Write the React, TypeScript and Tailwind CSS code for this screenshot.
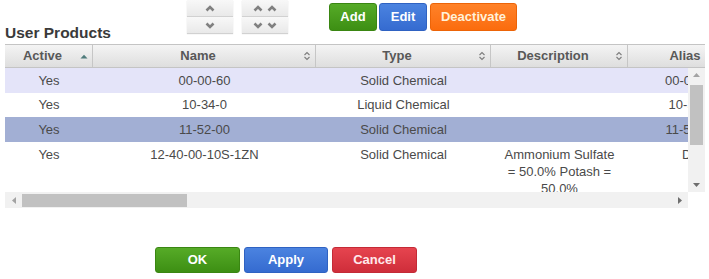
import React from "react"

type Row = {
  name: string
  type: string
  desc: string[]
  alias: string
  bg: string
  tall?: boolean
}

const rows: Row[] = [
  { name: "00-00-60", type: "Solid Chemical", desc: [], alias: "00-00-60", bg: "bg-[#e4e4f9]" },
  { name: "10-34-0", type: "Liquid Chemical", desc: [], alias: "10-34-0", bg: "bg-white" },
  { name: "11-52-00", type: "Solid Chemical", desc: [], alias: "11-52-00", bg: "bg-[#a2afd4]" },
  {
    name: "12-40-00-10S-1ZN",
    type: "Solid Chemical",
    desc: ["Ammonium Sulfate", "= 50.0% Potash =", "50.0%"],
    alias: "DS",
    bg: "bg-white",
    tall: true,
  },
]

function Chevron({ up }: { up?: boolean }) {
  return (
    <svg width="10" height="7" viewBox="0 0 10 7" className="block">
      <path
        d={up ? "M1.5 5.5 L5 2 L8.5 5.5" : "M1.5 1.5 L5 5 L8.5 1.5"}
        fill="none"
        stroke="#808080"
        strokeWidth="2.6"
      />
    </svg>
  )
}

function ArrowBtn({ up, double }: { up?: boolean; double?: boolean }) {
  return (
    <div className="h-[16px] w-[46px] flex items-center justify-center gap-[4px] bg-gradient-to-b from-[#f8f8f8] to-[#e9e9e9] shadow-[0_1px_1px_rgba(0,0,0,0.18)]">
      <Chevron up={up} />
      {double && <Chevron up={up} />}
    </div>
  )
}

function SortIcon() {
  return (
    <svg width="8" height="10" viewBox="0 0 8 10" className="block shrink-0">
      <path d="M1.5 4 L4 1.5 L6.5 4 M1.5 6 L4 8.5 L6.5 6" fill="none" stroke="#7d7d7d" strokeWidth="1.1" />
    </svg>
  )
}

function HeadCell({ label, width, active, last }: { label: string; width: string; active?: boolean; last?: boolean }) {
  return (
    <div className={`${width} shrink-0 h-full flex items-center pr-[4px] ${last ? "" : "border-r border-[#c6c6c6]"}`}>
      <span className="flex-1 text-center">{label}</span>
      <span className="w-[8px] flex justify-center">
        {active ? (
          <svg width="8" height="5" viewBox="0 0 8 5" className="block">
            <path d="M0.5 4.5 L4 0.8 L7.5 4.5 Z" fill="#4f7b7b" />
          </svg>
        ) : (
          <SortIcon />
        )}
      </span>
    </div>
  )
}

function Btn({ label, cls, width, height }: { label: string; cls: string; width: string; height: string }) {
  return (
    <div className={`${width} ${height} rounded-[3px] flex items-center justify-center font-bold text-[13px] ${cls}`}>
      {label}
    </div>
  )
}

export default function App() {
  return (
    <div className="w-[709px] h-[279px] bg-white overflow-hidden font-['Liberation_Sans',Arial,sans-serif]">
      {/* toolbar */}
      <div className="h-[44px] flex items-start">
        <div className="w-[187px] pl-[5px] mt-[24px] text-[15.5px] leading-[18px] font-bold text-[#3a3a3a]">
          User Products
        </div>
        <div className="flex flex-col gap-[1px]">
          <ArrowBtn up />
          <ArrowBtn />
        </div>
        <div className="ml-[9px] flex flex-col gap-[1px]">
          <ArrowBtn up double />
          <ArrowBtn double />
        </div>
        <div className="ml-[41px] mt-[3px] flex">
          <Btn label="Add" width="w-[48px]" height="h-[28px]" cls="bg-gradient-to-b from-[#56ab27] to-[#3d8f13] text-white border border-[#3a8612]" />
          <Btn label="Edit" width="w-[48px]" height="h-[28px]" cls="ml-[2px] bg-gradient-to-b from-[#4b83e0] to-[#356bd0] text-white border border-[#2f62c2]" />
          <Btn label="Deactivate" width="w-[87px]" height="h-[28px]" cls="ml-[3px] bg-gradient-to-b from-[#ff8228] to-[#fb6c0c] text-[#fff1d9] border border-[#ec6408]" />
        </div>
      </div>

      {/* grid */}
      <div className="ml-[5px] w-[700px]">
        <div className="h-[24px] flex overflow-hidden border-y border-[#c4c4c4] bg-gradient-to-b from-[#f4f4f4] to-[#dedede] text-[13px] font-bold text-[#585858]">
          <HeadCell label="Active" width="w-[88px]" active />
          <HeadCell label="Name" width="w-[223px]" />
          <HeadCell label="Type" width="w-[175px]" />
          <HeadCell label="Description" width="w-[137px]" />
          <HeadCell label="Alias" width="w-[126px]" last />
        </div>

        <div className="flex h-[124px]">
          <div className="w-[683px] overflow-hidden text-[13px] text-[#4a4a4a]">
            {rows.map((r, i) => (
              <div key={i} className={`flex w-[749px] ${r.bg} ${r.tall ? "h-[60px] items-start pt-[4px] leading-[17px]" : "h-[24.5px] items-center"}`}>
                <div className="w-[88px] shrink-0 text-center">Yes</div>
                <div className="w-[223px] shrink-0 text-center">{r.name}</div>
                <div className="w-[175px] shrink-0 text-center">{r.type}</div>
                <div className="w-[137px] shrink-0 text-center">
                  {r.desc.map((d, j) => (
                    <div key={j}>{d}</div>
                  ))}
                </div>
                <div className="w-[126px] shrink-0 text-center">{r.alias}</div>
              </div>
            ))}
          </div>
          {/* vertical scrollbar */}
          <div className="w-[17px] h-full bg-[#f1f1f1] flex flex-col items-center">
            <div className="h-[14px] flex items-center">
              <svg width="7" height="4" viewBox="0 0 7 4" className="block">
                <path d="M0 4 L3.5 0 L7 4 Z" fill="#a3a3a3" />
              </svg>
            </div>
            <div className="mt-[3px] w-[13px] h-[60px] bg-[#c1c1c1]" />
            <div className="flex-1" />
            <div className="h-[14px] flex items-center">
              <svg width="7" height="4" viewBox="0 0 7 4" className="block">
                <path d="M0 0 L3.5 4 L7 0 Z" fill="#6e6e6e" />
              </svg>
            </div>
          </div>
        </div>

        {/* horizontal scrollbar */}
        <div className="flex h-[16px]">
          <div className="w-[683px] bg-[#f1f1f1] flex items-center">
            <div className="w-[17px] flex justify-center">
              <svg width="4" height="7" viewBox="0 0 4 7" className="block">
                <path d="M4 0 L0 3.5 L4 7 Z" fill="#a3a3a3" />
              </svg>
            </div>
            <div className="w-[165px] h-[13px] bg-[#c1c1c1]" />
            <div className="flex-1" />
            <div className="w-[17px] flex justify-center">
              <svg width="4" height="7" viewBox="0 0 4 7" className="block">
                <path d="M0 0 L4 3.5 L0 7 Z" fill="#6e6e6e" />
              </svg>
            </div>
          </div>
          <div className="w-[17px] bg-white" />
        </div>
      </div>

      {/* footer buttons */}
      <div className="mt-[39px] pl-[155px] flex gap-[4px]">
        <Btn label="OK" width="w-[85px]" height="h-[26px]" cls="bg-gradient-to-b from-[#56ab27] to-[#3d8f13] text-white border border-[#3a8612]" />
        <Btn label="Apply" width="w-[84px]" height="h-[26px]" cls="bg-gradient-to-b from-[#4b83e0] to-[#356bd0] text-white border border-[#2f62c2]" />
        <Btn label="Cancel" width="w-[85px]" height="h-[26px]" cls="bg-gradient-to-b from-[#e6444f] to-[#cf2d3a] text-[#ffe9ec] border border-[#c42a36]" />
      </div>
    </div>
  )
}
